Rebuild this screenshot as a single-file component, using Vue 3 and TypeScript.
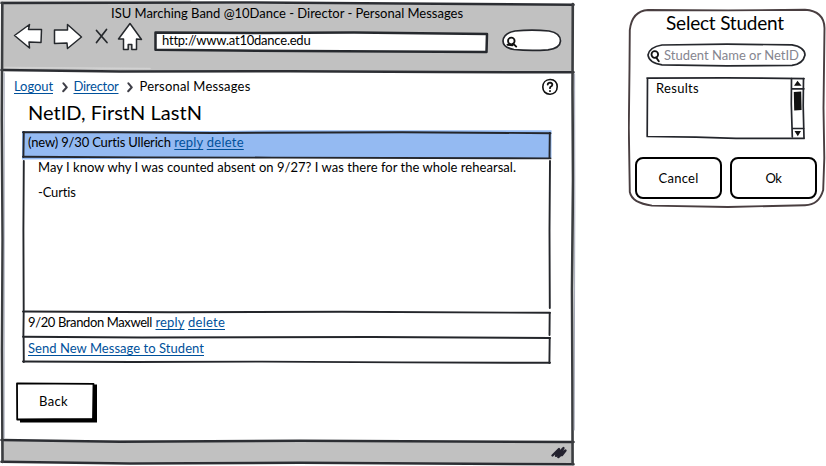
<script setup lang="ts">
import type { Directive } from 'vue'

interface Message {
  label: string
  labelWidth: number
}

const title = 'ISU Marching Band @10Dance - Director - Personal Messages'
const address = 'http://www.at10dance.edu'

const current: Message = { label: '(new) 9/30 Curtis Ullerich', labelWidth: 143 }
const older: Message = { label: '9/20 Brandon Maxwell', labelWidth: 124 }

// Spreads the letters of a label so that it fills the given width.
const vFit: Directive<HTMLElement, number> = {
  mounted(el, binding) {
    const natural = el.getBoundingClientRect().width
    const count = (el.textContent ?? '').length
    const step = (binding.value - natural) / count
    el.style.letterSpacing = `${step.toFixed(3)}px`
  },
}
</script>

<template>
  <main class="stage">
    <section class="browser">
      <svg class="sketch" viewBox="0 0 576 466" aria-hidden="true">
        <path class="chrome" d="M2 3.5 L573 4.5 L573 72 L2 70Z M2 440 L573 441.5 L573 464 L2 462Z" />
        <path class="halo" d="M0 1.2 L190 1 M150 68.5 L5 67.5" />
        <path class="frame" d="M1.5 3 L240 2.5 L400 3.5 L573.5 4.7 M1.5 70 L120 71.5 L290 71.3 L440 72 L573.5 72.3 M1.5 440 L120 441.7 L300 440.7 L573.5 442 M1.5 461.7 L130 463.5 L300 462.8 L573.5 464.3" />
        <path class="side" d="M2.3 3 L1.8 120 L2.6 240 L2 350 L2.5 462 M572.8 4 L572.5 90 L573 180 L572 290 L572.4 380 L572.6 464" />
        <path class="edge" d="M4.2 73 L4.1 438 M574.6 74 L574.8 200 L574.2 430" />
      </svg>

      <header class="chrome-bar">
        <h1 class="title"><span v-fit="352">{{ title }}</span></h1>
        <div class="toolbar">
          <svg class="nav back" width="30" height="31" viewBox="13 21 30 31">
            <path d="M14.5 35.5 L29.5 24.5 L28.5 29.5 L41.5 29.5 L41 42.5 L29 42 L29.5 48Z" />
          </svg>
          <svg class="nav forward" width="30" height="31" viewBox="53 21 30 31">
            <path d="M54.5 30 L67.5 30 L67.5 24.5 L81.5 37 L67.5 48.5 L67 43 L54.5 43.5Z" />
          </svg>
          <svg class="nav stop" width="14" height="31" viewBox="95 21 14 31">
            <path d="M96.5 30.5 L107 42.5 M106.5 29.5 L96.5 42.5" />
          </svg>
          <svg class="nav home" width="26" height="31" viewBox="117 21 26 31">
            <path d="M130 23.5 L141.5 39.5 L136.5 39 L136.5 49.5 L131.8 49.5 L131.8 44.5 L128.2 44.5 L128.2 49.5 L123.5 49.5 L123.5 39 L118.5 39Z" />
          </svg>
          <div class="address">
            <svg class="sketch" viewBox="0 0 335 23" aria-hidden="true">
              <path class="field" d="M1.5 1.5 L100 2 L200 1.6 L333 3 L332.5 21 L190 20.3 L80 19.6 L1.5 18.8Z" />
            </svg>
            <span v-fit="148">{{ address }}</span>
          </div>
          <svg class="lookup" width="60" height="23" viewBox="502 29 60 23">
            <path class="pill" d="M515 31 Q532 29.2 549 31 Q560.5 33 560.5 41 Q560 48.5 548 49.8 Q530 51 514 49.5 Q503 47.5 503 41 Q503.5 33 515 31Z" />
            <circle class="lens" cx="511.3" cy="41" r="3.3" />
            <path class="grip" d="M513.2 43.6 L516.2 46.6 M507.5 44.7 L512.5 45.2" />
          </svg>
        </div>
      </header>

      <div class="page">
        <nav class="crumbs">
          <a href="#" v-fit="39">Logout</a>
          <svg class="chevron" width="7" height="12" viewBox="0 0 7 12"><path d="M1.4 2.3 L4.8 6.3 L1.2 10.2" /></svg>
          <a href="#" v-fit="45">Director</a>
          <svg class="chevron" width="7" height="12" viewBox="0 0 7 12"><path d="M1.4 2.3 L4.8 6.3 L1.2 10.2" /></svg>
          <span v-fit="111">Personal Messages</span>
          <svg class="help" width="18" height="18" viewBox="0 0 18 18">
            <path d="M9 1.5 C13.6 1.3 16.3 4.6 16.2 8.8 C16.2 13.5 13 16.3 9 16.2 C4.5 16.3 1.8 13 1.8 9 C1.8 4.8 4.6 1.6 9 1.5Z" />
            <path class="mark" d="M6.7 6.6 Q6.9 4.6 9.1 4.6 Q11.4 4.8 11.3 6.8 Q11.1 8.1 9.6 8.8 Q9 9.3 9 10.2 M9 12.8 L9 13.2" />
          </svg>
        </nav>

        <h2 class="student"><span v-fit="174">NetID, FirstN LastN</span></h2>

        <div class="accordion">
          <svg class="sketch" viewBox="0 0 530 236" aria-hidden="true">
            <path class="band" d="M0 1 L200 1 L250 0.3 L529.5 0.3 L529.5 28 L255 28 L0 29.5Z" />
            <path class="rule" d="M1 2.2 L95 2.2 L190 3 L380 2.2 L528.5 3.2 M1 26.8 L120 27.4 L250 27.6 L528.5 28.4 M1 181.5 L150 182.2 L320 181.7 L528 182.8 M1 206.8 L120 207.5 L350 207 L528 208 M1 231.5 L110 232 L240 231.6 L380 232.4 L528 232.8" />
            <path class="rule" d="M1.8 2 L1.4 27 M1.8 31 L1.4 100 L1.7 180 M1.7 181 L1.4 206 M1.6 207 L1.8 232 M527.8 3 L527.5 28 M528 31 L527.5 100 L527.8 178 M527.7 183 L527.5 205 M527.7 208 L527.4 233" />
          </svg>
          <div class="row first">
            <span v-fit="current.labelWidth">{{ current.label }}</span>
            <a href="#" v-fit="29">reply</a>
            <a href="#" v-fit="37">delete</a>
          </div>
          <article class="message">
            <p><span v-fit="478">May I know why I was counted absent on 9/27? I was there for the whole rehearsal.</span></p>
            <p><span v-fit="38">-Curtis</span></p>
          </article>
          <div class="row">
            <span v-fit="older.labelWidth">{{ older.label }}</span>
            <a href="#" v-fit="29">reply</a>
            <a href="#" v-fit="37">delete</a>
          </div>
          <div class="row">
            <a href="#" v-fit="176">Send New Message to Student</a>
          </div>
        </div>

        <button class="back-button" type="button">
          <svg class="sketch" viewBox="0 0 82 41" aria-hidden="true">
            <path class="shadow" d="M4 2.5 L81 2.5 L81 40.5 L4 40.5Z" />
            <path class="face" d="M1 1.4 L77.5 1.8 L77 36.8 L1.2 37.5Z" />
          </svg>
          <span v-fit="29">Back</span>
        </button>
      </div>

      <footer class="status">
        <svg width="18" height="18" viewBox="0 0 18 18">
          <path d="M2.5 12.5 L9 6 L6 12.8 L13.5 5 L8.3 14 L15.5 7.5 L12 12" />
        </svg>
      </footer>
    </section>

    <section class="dialog">
      <svg class="sketch" viewBox="0 0 198 201" aria-hidden="true">
        <path class="outline" d="M20 2 L100 2.4 L177 1.8 Q196 3 196.5 20 L195.5 100 L196.3 150 L195.2 182 Q191 197 177 197.2 L100 199 L24 197.6 Q4 195 1.8 184 L0.8 120 L1.5 60 L1.8 22 Q4 3 20 2Z" />
      </svg>
      <h2 class="dialog-title"><span v-fit="118">Select Student</span></h2>
      <div class="student-search">
        <svg class="sketch" viewBox="0 0 160 24" aria-hidden="true">
          <path class="capsule" d="M15 2 L80 1.2 L145 1.8 Q157.8 4 158 12 Q156 21 145 22.4 L80 22.8 L15 21.8 Q2 20 1 12 Q2.5 4 15 2Z" />
          <circle class="lens" cx="7.8" cy="11.5" r="3.3" />
          <path class="grip" d="M9.2 14.5 L11.8 18.2" />
        </svg>
        <span v-fit="135">Student Name or NetID</span>
      </div>
      <div class="results">
        <svg class="sketch" viewBox="0 0 160 64" aria-hidden="true">
          <path class="list-line" d="M1 2.1 L80 1.8 L158 2.6 M1.5 2 L1.2 60.5 L50 61.2 L90 62.3 L158 62.4" />
          <path class="bar-line" d="M145.5 2.5 L145.3 28 L146.3 61 M157.5 2.5 L157.2 30 L158 62 M145.5 12.8 L158 12.8 M146 52.5 L158 52.5" />
          <path class="solid" d="M148 9.8 L151.5 4.8 L155.5 9.8Z M148.5 55 L155 55 L151.8 60.3Z M147.8 16 L155.2 15.5 L155.6 34 L148.2 34.5Z" />
        </svg>
        <span v-fit="43">Results</span>
      </div>
      <div class="actions">
        <button type="button"><span v-fit="40">Cancel</span></button>
        <button type="button"><span v-fit="16">Ok</span></button>
      </div>
    </section>
  </main>
</template>

<style>
body {
  background: #fff;
}
</style>

<style scoped>
.stage {
  display: flex;
  width: 826px;
  height: 466px;
  overflow: hidden;
  color: #000;
  font: 13px/16px Lato, "Liberation Sans", sans-serif;
}
.stage * {
  box-sizing: border-box;
}
span,
a {
  display: inline-block;
  white-space: nowrap;
}
a {
  color: #00519b;
  text-decoration: underline;
  text-decoration-thickness: 1px;
  text-underline-offset: 2px;
  text-decoration-skip-ink: none;
}
h1,
h2,
p {
  margin: 0;
  font-weight: 400;
}
button {
  padding: 0;
  color: inherit;
  font: inherit;
}
path,
circle {
  fill: none;
  stroke-linecap: round;
  stroke-linejoin: round;
}
.sketch {
  position: absolute;
  inset: 0;
  z-index: -1;
  width: 100%;
  height: 100%;
}
.browser,
.address,
.accordion,
.back-button,
.dialog,
.student-search,
.results {
  position: relative;
  isolation: isolate;
}
.browser {
  display: flex;
  flex-direction: column;
  width: 576px;
  height: 466px;
}
.chrome {
  fill: #c1c1c1;
}
.halo {
  stroke: #d2d2d2;
  stroke-width: 1.6;
}
.frame {
  stroke: #2c2e33;
  stroke-width: 2.5;
}
.side {
  stroke: #3b3d40;
  stroke-width: 2.6;
}
.edge {
  stroke: #9b9fb0;
  stroke-width: 0.9;
}
.chrome-bar {
  height: 73px;
  padding-top: 5px;
}
.title {
  padding-left: 111px;
  font-size: 13px;
}
.toolbar {
  display: flex;
  padding-left: 13px;
}
.nav path {
  fill: #fff;
  stroke: #25282c;
  stroke-width: 1.5;
}
.nav.stop path {
  stroke-width: 1.7;
}
.forward {
  margin-left: 10px;
}
.stop {
  margin-left: 12px;
}
.home {
  margin-left: 8px;
}
.address {
  width: 335px;
  height: 23px;
  margin: 10px 0 0 11px;
  padding: 1px 0 0 8px;
}
.field {
  fill: #fff;
  stroke: #26292e;
  stroke-width: 2.5;
}
.lookup {
  margin: 8px 0 0 13px;
}
.pill,
.capsule {
  fill: #fff;
  stroke: #25272c;
  stroke-width: 1.7;
}
.lens {
  stroke: #111;
  stroke-width: 1.8;
}
.grip {
  stroke: #111;
  stroke-width: 1.9;
}
.page {
  flex: 1;
  padding-top: 5px;
}
.crumbs {
  display: flex;
  padding-left: 14px;
}
.chevron {
  flex: none;
  margin: 3px 5px 0 8.5px;
}
.chevron + span {
  margin-left: 0.5px;
}
.chevron path {
  stroke: #3f3f48;
  stroke-width: 2;
}
.help {
  margin: 0 17px 0 auto;
}
.help path {
  stroke: #111;
  stroke-width: 1.6;
}
.help .mark {
  stroke-width: 1.8;
}
.student {
  padding: 4px 0 0 28px;
  font-size: 20px;
  line-height: 24px;
}
.accordion {
  width: 530px;
  height: 236px;
  margin: 6px 0 0 22px;
}
.band {
  fill: #94baf2;
}
.rule {
  stroke: #24262b;
  stroke-width: 1.9;
}
.row {
  display: flex;
  gap: 3.5px;
  height: 26px;
  padding: 3px 0 0 6px;
}
.row.first {
  height: 29px;
  padding-top: 4px;
}
.message {
  height: 152px;
  padding-left: 16px;
}
.message p {
  height: 25px;
}
.back-button {
  display: block;
  width: 82px;
  height: 41px;
  margin: 16px 0 0 16px;
  padding: 0 7px 3px 0;
  border: 0;
  background: none;
}
.shadow {
  fill: #000;
}
.face {
  fill: #fff;
  stroke: #000;
  stroke-width: 1.8;
}
.status {
  display: flex;
  justify-content: flex-end;
  height: 26px;
  padding: 3px 8px 0 0;
}
.status path {
  stroke: #24222f;
  stroke-width: 2.4;
}
.dialog {
  width: 198px;
  height: 201px;
  margin: 8px 0 0 52px;
}
.outline {
  fill: #fff;
  stroke: #493e40;
  stroke-width: 1.9;
}
.dialog-title {
  padding: 3px 0 0 38px;
  font-size: 19px;
  line-height: 24px;
}
.student-search {
  width: 160px;
  height: 24px;
  margin: 8px 0 0 19px;
  padding: 4px 0 0 17px;
  color: #85858f;
}
.results {
  width: 160px;
  height: 64px;
  margin: 9px 0 0 18px;
  padding: 4px 0 0 10px;
}
.list-line,
.bar-line {
  stroke: #23252b;
  stroke-width: 1.7;
}
.solid {
  fill: #111;
}
.actions {
  display: flex;
  gap: 8px;
  margin: 17px 0 0 7px;
}
.actions button {
  width: 87px;
  height: 42px;
  padding-bottom: 1px;
  border: 2px solid #000;
  border-radius: 8px;
  background: #fff;
}
</style>
